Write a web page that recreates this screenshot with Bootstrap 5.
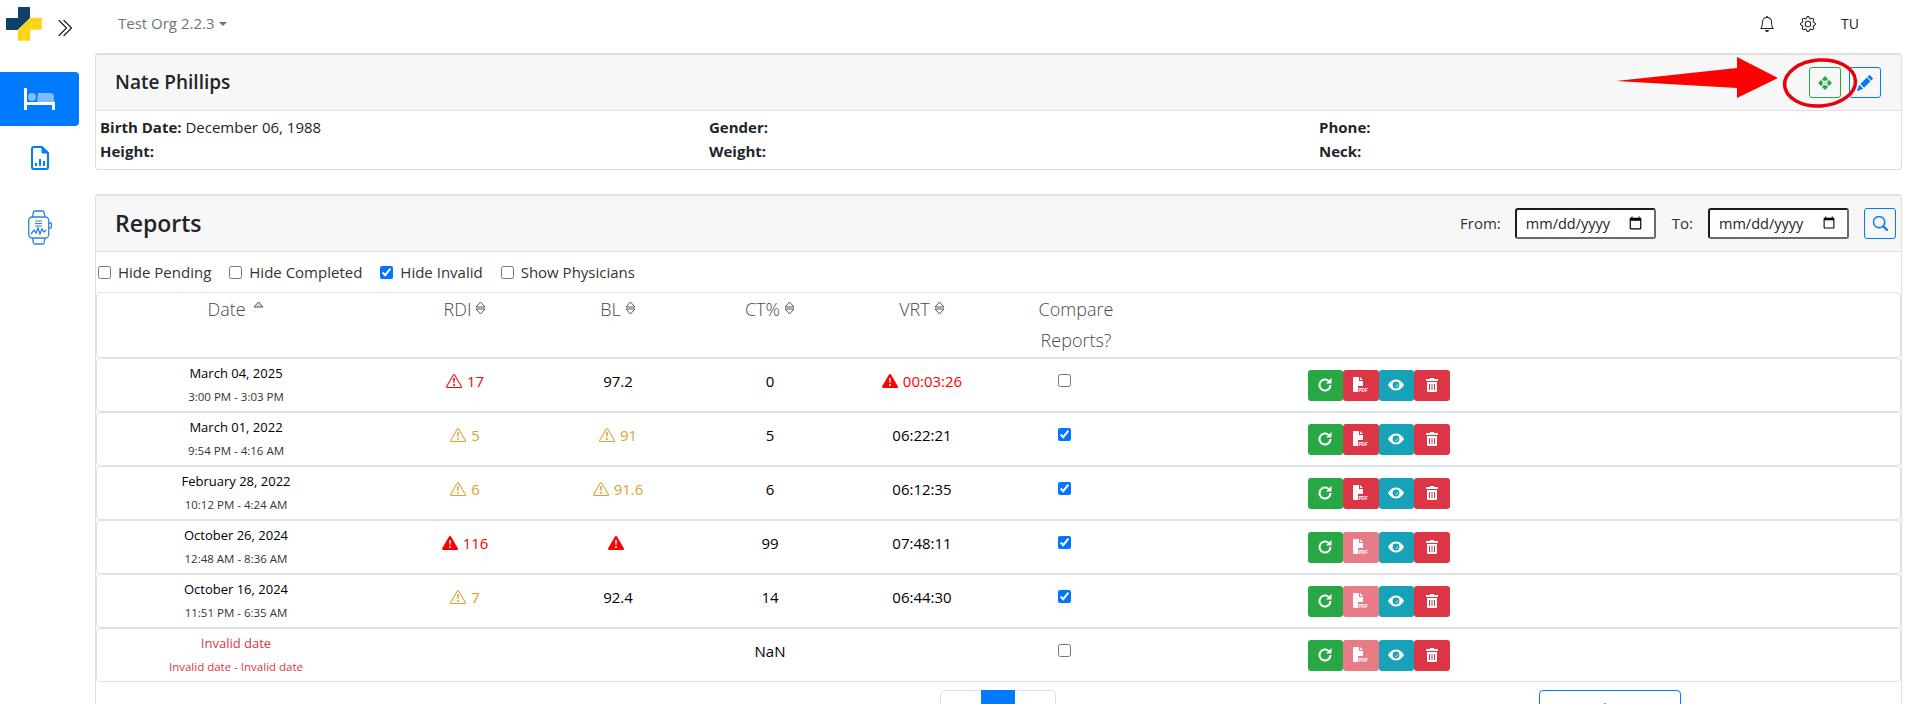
<!DOCTYPE html>
<html lang="en"><head><meta charset="utf-8"><title>Reports</title>
<link href="https://cdn.jsdelivr.net/npm/bootstrap@5.3.0/dist/css/bootstrap.min.css" rel="stylesheet">
<style>
html,body{height:704px;overflow:hidden}
body{font-family:"Open Sans","Noto Sans",sans-serif;font-size:15px;color:#212529;background:#fff}
.shell{display:flex;width:1916px}
.rail{width:79px;flex:none}
.logo-row{height:53px;display:flex;align-items:flex-start;padding:7px 0 0 6px;gap:12px}
.rail-tile{height:54px;margin-top:19px;background:#007bff;border-radius:0 4px 4px 0;display:flex;align-items:center;justify-content:center}
.rail-ico{display:flex;justify-content:center;margin-top:20px}
.rail-ico.watch{margin-top:40px}
.main{flex:1;padding-left:16px;padding-right:14px;min-width:0}
.topbar{height:53px;display:flex;align-items:center;padding-left:23px;padding-right:43px;margin-top:-3px;color:#6c757d}
.org{font-size:15px;color:#6c757d}
.org::after{content:"";display:inline-block;margin-left:4px;vertical-align:3px;border-top:4px solid;border-left:4px solid transparent;border-right:4px solid transparent}
.top-r{margin-left:auto;display:flex;align-items:center;gap:25px;color:#212529;font-size:14px}
.pcard{border:1px solid #dfdfdf;border-radius:4px;border-top-width:2px;margin-top:3px;position:relative}
.phead{background:#f7f7f7;border-bottom:1px solid #dfdfdf;display:flex;align-items:center;padding:0 20px 0 19px;height:56px;border-radius:4px 4px 0 0}
.pname{font-size:19px;font-weight:600;color:#212529}
.rtitle{font-size:23px;font-weight:600;color:#212529}
.head-tools{margin-left:auto;display:flex;align-items:center;gap:8px}
.sq{width:32px;height:31px;padding:0;display:flex;align-items:center;justify-content:center;border-radius:3px;background:transparent}
.sq-g{border:1px solid #28a745}
.sq-b{border:1px solid #007bff}
.info{display:grid;grid-template-columns:609px 610px 1fr;padding:5px 4px 6px;line-height:23.500px;font-size:15px}
.info b{font-weight:700}
.card-two{margin-top:24px;border:1px solid #dfdfdf;border-top-width:2px;border-bottom:0;border-radius:4px 4px 0 0;height:600px}
.card-two .phead{padding-right:5px}
.lbl{font-size:15px;color:#333}
.lbl-from{margin-right:14px}
.lbl-to{margin:0 15px 0 16px}
.search-gap{margin-left:15px}
.datein{width:141px;height:31px;border:2px solid;border-color:#1c1c1c #6a6a6a #6a6a6a #1c1c1c;border-radius:3px;padding:0 9px;font:14.500px "Open Sans",sans-serif;color:#212529;background:#fff}
.filters{display:flex;align-items:center;height:40px;padding-left:2px;font-size:15px;color:#333;gap:18px}
.filters label{display:flex;align-items:center;gap:7px}
.chk{width:13px;height:13px;margin:0;accent-color:#0075ff}
.rowgrid{display:grid;grid-template-columns:278px 180px 126px 178px 126px 158px 471px 1fr;align-items:center;text-align:center;border:1px solid #dee2e6;border-radius:4px;height:54px;color:#000}
.hrow{height:66px;align-items:start;font-size:18px;font-weight:300;line-height:31px;color:#4a4a4a;padding-top:1px}
.hrow svg{vertical-align:1px}
.cmp-head{padding-left:24px}
.dt{font-size:13px;line-height:24px;color:#333}
.tm{font-size:11.500px;line-height:24px;color:#333}
.val{font-size:15px}
.up-cell{padding-bottom:8px}
.red{color:#f00}.amber{color:#e0a030}
.invalid,.invalid .tm{color:#dc3545}
.ok-ico{vertical-align:-2px;margin-right:5px}
.acts{display:flex;justify-content:center}
.act{width:35.500px;height:31px;border:0;padding:0;display:flex;align-items:center;justify-content:center;border-radius:3px;color:#fff}
.a-g{background:#28a745}.a-r{background:#dc3545}.a-t{background:#17a2b8}.a-f{background:#e77c87}
.foot{display:flex;position:relative;height:40px;margin-top:8px}
.pager{margin-left:844px;display:flex;height:40px;border:1px solid #dee2e6;border-radius:4px;width:116px;color:#007bff;font-size:15px;line-height:28px;text-align:center}
.pager span{flex:1}
.pager .on{flex:none;width:34px;background:#007bff;color:#fff;margin-top:-1px;line-height:42px}
.more{margin-left:483px;width:142px;height:40px;border:1px solid #007bff;border-radius:4px;background:#fff;color:#007bff;font-size:15px;padding:0 0 3px}
.callout{position:absolute;left:1610px;top:50px;pointer-events:none}
</style></head>
<body>
<div class="shell">
<aside class="rail">
 <div class="logo-row">
  <svg width="36" height="34" viewBox="0 0 36 34"><path d="M12.500 .5h11v11l-12 11h-11v-11h12z" fill="#0f3f6b" stroke="#0f3f6b" stroke-linejoin="round"/><path d="M24 11h11.500v11.500H24V33.500H12V23z" fill="#fed41c" stroke="#fed41c" stroke-linejoin="round" stroke-width=".5"/></svg>
  <svg width="20" height="20" viewBox="0 0 16 16" fill="#212529" style="margin-top:11px"><path d="M3.646 1.646a.5.500 0 0 1 .708 0l6 6a.5.500 0 0 1 0 .708l-6 6a.5.500 0 0 1-.708-.708L9.293 8 3.646 2.354a.5.500 0 0 1 0-.708z"/><path d="M7.646 1.646a.5.500 0 0 1 .708 0l6 6a.5.500 0 0 1 0 .708l-6 6a.5.500 0 0 1-.708-.708L13.293 8 7.646 2.354a.5.500 0 0 1 0-.708z"/></svg>
 </div>
 <div class="rail-tile">
  <svg width="31" height="22" viewBox="0 0 31 22"><path d="M14 5h12a4 4 0 0 1 4 4v6H13z" fill="#80bdff"/><circle cx="8" cy="9" r="4" fill="#80bdff"/><path d="M1.500 1v20M1 15.500h29M29.500 15v6" stroke="#fff" stroke-width="3" stroke-linecap="round" fill="none"/></svg>
 </div>
 <div class="rail-ico">
  <svg width="18" height="24" viewBox="0 0 18 24" fill="none" stroke="#007bff" stroke-width="2"><path d="M3 1h8l6 6v14a2 2 0 0 1-2 2H3a2 2 0 0 1-2-2V3a2 2 0 0 1 2-2z"/><path d="M11 2l5 5h-5z" fill="#007bff" stroke-width="1"/><path d="M5 20v-3M9 20v-7M13 20v-5"/></svg>
 </div>
 <div class="rail-ico watch">
  <svg width="24" height="35" viewBox="0 0 24 35" fill="none" stroke="#2f80e0" stroke-width="1.300"><rect x=".75" y="7" width="20" height="21" rx="3.500"/><path d="M4.500 7l1-5a1.500 1.500 0 0 1 1.500-1h7.500a1.500 1.500 0 0 1 1.500 1l1 5M4.500 28l1 5a1.500 1.500 0 0 0 1.500 1h7.500a1.500 1.500 0 0 0 1.500-1l1-5M21 13h1.500a1 1 0 0 1 1 1v3a1 1 0 0 1-1 1H21"/><path d="M3 24l3-4 2 3 2-5 2 6 2-5 2 3 2-2"/><path d="M7 11h7M7 13.500h7M7 16h7" stroke-width="1"/></svg>
 </div>
</aside>
<main class="main">
 <div class="topbar">
  <span class="org">Test Org 2.2.3</span>
  <div class="top-r">
   <svg width="16" height="16" viewBox="0 0 16 16" fill="#212529"><path d="M8 16a2 2 0 0 0 2-2H6a2 2 0 0 0 2 2zM8 1.918l-.797.161A4.002 4.002 0 0 0 4 6c0 .628-.134 2.197-.459 3.742-.16.767-.376 1.566-.663 2.258h10.244c-.287-.692-.502-1.490-.663-2.258C12.134 8.197 12 6.628 12 6a4.002 4.002 0 0 0-3.203-3.920L8 1.917zM14.220 12c.223.447.481.801.78 1H1c.299-.199.557-.553.78-1C2.680 10.200 3 6.880 3 6c0-2.420 1.720-4.440 4.005-4.901a1 1 0 1 1 1.990 0A5.002 5.002 0 0 1 13 6c0 .88.32 4.200 1.220 6z"/></svg>
   <svg width="16" height="16" viewBox="0 0 16 16" fill="#212529"><path d="M8 4.754a3.246 3.246 0 1 0 0 6.492 3.246 3.246 0 0 0 0-6.492zM5.754 8a2.246 2.246 0 1 1 4.492 0 2.246 2.246 0 0 1-4.492 0z"/><path d="M9.796 1.343c-.527-1.790-3.065-1.790-3.592 0l-.094.319a.873.873 0 0 1-1.255.52l-.292-.16c-1.640-.892-3.433.902-2.540 2.541l.159.292a.873.873 0 0 1-.52 1.255l-.319.094c-1.790.527-1.790 3.065 0 3.592l.319.094a.873.873 0 0 1 .52 1.255l-.16.292c-.892 1.640.901 3.434 2.541 2.540l.292-.159a.873.873 0 0 1 1.255.52l.094.319c.527 1.790 3.065 1.790 3.592 0l.094-.319a.873.873 0 0 1 1.255-.52l.292.16c1.640.893 3.434-.902 2.540-2.541l-.159-.292a.873.873 0 0 1 .52-1.255l.319-.094c1.790-.527 1.790-3.065 0-3.592l-.319-.094a.873.873 0 0 1-.52-1.255l.16-.292c.893-1.640-.902-3.433-2.541-2.540l-.292.159a.873.873 0 0 1-1.255-.52l-.094-.319zm-2.633.283c.246-.835 1.428-.835 1.674 0l.094.319a1.873 1.873 0 0 0 2.693 1.115l.291-.16c.764-.415 1.600.42 1.184 1.185l-.159.292a1.873 1.873 0 0 0 1.116 2.692l.318.094c.835.246.835 1.428 0 1.674l-.319.094a1.873 1.873 0 0 0-1.115 2.693l.16.291c.415.764-.42 1.600-1.185 1.184l-.291-.159a1.873 1.873 0 0 0-2.693 1.116l-.094.318c-.246.835-1.428.835-1.674 0l-.094-.319a1.873 1.873 0 0 0-2.692-1.115l-.292.16c-.764.415-1.600-.42-1.184-1.185l.159-.291A1.873 1.873 0 0 0 1.945 8.930l-.319-.094c-.835-.246-.835-1.428 0-1.674l.319-.094A1.873 1.873 0 0 0 3.060 4.377l-.16-.292c-.415-.764.42-1.600 1.185-1.184l.292.159a1.873 1.873 0 0 0 2.692-1.115l.094-.319z"/></svg>
   <span>TU</span>
  </div>
 </div>
 <section class="pcard">
  <div class="phead"><span class="pname">Nate Phillips</span>
   <div class="head-tools">
    <button class="sq sq-g" type="button" aria-label="Move"><svg width="14" height="14" viewBox="0 0 14 14" fill="#28a745"><path d="M7 0l3 3-1.500 1.700h-3L4 3zM7 14l-3-3 1.500-1.700h3L10 11zM0 7l3-3 1.700 1.500v3L3 10zM14 7l-3 3-1.700-1.500v-3L11 4z"/><circle cx="7" cy="7" r="1" fill="#8fd19e"/></svg></button>
    <button class="sq sq-b" type="button" aria-label="Edit"><svg width="16" height="16" viewBox="0 0 16 16" fill="#007bff"><path d="M12.854.146a.5.500 0 0 0-.707 0L10.500 1.793 14.207 5.500l1.647-1.646a.5.500 0 0 0 0-.708l-3-3zm.646 6.061L9.793 2.500 3.293 9H3.500a.5.500 0 0 1 .5.500v.5h.5a.5.500 0 0 1 .5.500v.5h.5a.5.500 0 0 1 .5.500v.5h.5a.5.500 0 0 1 .5.500v.207l6.500-6.500zm-7.468 7.468A.5.500 0 0 1 6 13.500V13h-.5a.5.500 0 0 1-.5-.5V12h-.5a.5.500 0 0 1-.5-.5V11h-.5a.5.500 0 0 1-.5-.5V10h-.5a.499.499 0 0 1-.175-.032l-.179.178a.5.500 0 0 0-.11.168l-2 5a.5.500 0 0 0 .65.65l5-2a.5.500 0 0 0 .168-.11l.178-.178z"/></svg></button>
   </div>
  </div>
  <div class="info">
   <div><b>Birth Date:</b> December 06, 1988</div><div><b>Gender:</b></div><div><b>Phone:</b></div>
   <div><b>Height:</b></div><div><b>Weight:</b></div><div><b>Neck:</b></div>
  </div>
 </section>
 <section class="card-two">
  <div class="phead"><span class="rtitle">Reports</span>
   <div class="head-tools" style="gap:0">
    <span class="lbl lbl-from">From:</span><input class="datein" type="date" aria-label="From">
    <span class="lbl lbl-to">To:</span><input class="datein" type="date" aria-label="To">
    <button class="sq sq-b search-gap" type="button" aria-label="Search"><svg width="15" height="15" viewBox="0 0 16 16" fill="#007bff" stroke="#007bff" stroke-width=".6"><path d="M11.742 10.344a6.500 6.500 0 1 0-1.397 1.398h-.001c.03.04.062.078.098.115l3.850 3.850a1 1 0 0 0 1.415-1.414l-3.850-3.850a1.007 1.007 0 0 0-.115-.1zM12 6.500a5.500 5.500 0 1 1-11 0 5.500 5.500 0 0 1 11 0z"/></svg></button>
   </div>
  </div>
  <div class="filters">
   <label><input class="chk" type="checkbox">Hide Pending</label>
   <label><input class="chk" type="checkbox">Hide Completed</label>
   <label><input class="chk" type="checkbox" checked>Hide Invalid</label>
   <label><input class="chk" type="checkbox">Show Physicians</label>
  </div>
  <div id="tbl"></div>
  <div class="foot"><div class="pager"><span>«</span><span class="on">1</span><span>»</span></div><button class="more" type="button">Load More</button></div>
 </section>
</main>
</div>
<svg class="callout" width="270" height="70" viewBox="0 0 270 70" aria-hidden="true"><path d="M6 31L127 18V7l41 21-41 20V38z" fill="#f00"/><ellipse cx="210" cy="33" rx="35.500" ry="23" fill="none" stroke="#e8000b" stroke-width="3.500" transform="rotate(-4 210 33)"/></svg>
<script>
const W='M7.938 2.016A.13.13 0 0 1 8.002 2a.13.13 0 0 1 .063.016.146.146 0 0 1 .054.057l6.857 11.667c.036.06.035.124.002.183a.163.163 0 0 1-.054.06.116.116 0 0 1-.066.017H1.146a.115.115 0 0 1-.066-.017.163.163 0 0 1-.054-.06.176.176 0 0 1 .002-.183L7.884 2.073a.147.147 0 0 1 .054-.057zm1.044-.45a1.130 1.130 0 0 0-1.960 0L.165 13.233c-.457.778.091 1.767.98 1.767h13.713c.889 0 1.438-.99.98-1.767L8.982 1.566zM7.002 12a1 1 0 1 1 2 0 1 1 0 0 1-2 0zM7.100 5.995a.905.905 0 1 1 1.800 0l-.35 3.507a.552.552 0 0 1-1.100 0L7.100 5.995z';
const F='M8.982 1.566a1.130 1.130 0 0 0-1.960 0L.165 13.233c-.457.778.091 1.767.98 1.767h13.713c.889 0 1.438-.99.98-1.767L8.982 1.566zM8 5c.535 0 .954.462.9.995l-.35 3.507a.552.552 0 0 1-1.100 0L7.100 5.995A.905.905 0 0 1 8 5zm.002 6a1 1 0 1 1 0 2 1 1 0 0 1 0-2z';
const ico=(d,c)=>`<svg class="ok-ico" width="16" height="16" viewBox="0 0 16 16" fill="${c}"><path d="${d}"/></svg>`;
const cell=v=>{if(!v)return '';if(typeof v==='string')return `<span>${v}</span>`;
 const c=v[0]==='a'?'#e0a030':'#f00',k=v[0]==='a'?'amber':'red',d=v[1]==='o'?W:F;return `<span class="${k}">${ico(d,c)}${v[2]||''}</span>`};
const sortI=`<svg width="11" height="14" viewBox="0 0 11 14" fill="none" stroke="#555" style="margin-left:4px"><path d="M1 6l4.500-5L10 6zM1 8l4.500 5L10 8z"/></svg>`;
const upI=`<svg width="11" height="14" viewBox="0 0 11 14" fill="#ddd" stroke="#555" style="margin-left:3px"><path d="M1 6l4.500-5L10 6z"/></svg>`;
const redo=`<svg width="16" height="16" viewBox="0 0 16 16"><path d="M13.500 8a5.500 5.500 0 1 1-1.600-3.900" fill="none" stroke="#fff" stroke-width="2"/><path d="M14.500 1v5.500H9z" fill="#fff"/></svg>`;
const pdf=`<svg width="15" height="16" viewBox="0 0 15 16"><path d="M0 1a1 1 0 0 1 1-1h5v4h4v5H5v6H1a1 1 0 0 1-1-1zM7 0l3 3H7z" fill="#fff"/><text x="5.500" y="14.500" font-size="4.600" font-weight="700" fill="#fff" font-family="Liberation Sans,sans-serif">PDF</text></svg>`;
const eye=`<svg width="16" height="12" viewBox="0 0 16 12"><path d="M0 6s3-5.500 8-5.500S16 6 16 6s-3 5.500-8 5.500S0 6 0 6z" fill="#fff"/><circle cx="8" cy="6" r="3.400" fill="#17a2b8"/><path d="M9.800 6a1.800 1.800 0 0 1-2.800 1.500C8.500 7.500 9 6.800 9.200 5z" fill="#fff"/></svg>`;
const trash=`<svg width="12" height="14" viewBox="0 0 12 14"><path d="M4 0h4v1h4v2H0V1h4zM1 4h10v9a1 1 0 0 1-1 1H2a1 1 0 0 1-1-1z" fill="#fff"/><path d="M3.500 6v6M6 6v6M8.500 6v6" stroke="#dc3545"/></svg>`;
const rows=[
 ['March 04, 2025','3:00 PM - 3:03 PM',['r','o','17'],'97.2','0',['r','f','00:03:26'],0,0],
 ['March 01, 2022','9:54 PM - 4:16 AM',['a','o','5'],['a','o','91'],'5','06:22:21',1,0],
 ['February 28, 2022','10:12 PM - 4:24 AM',['a','o','6'],['a','o','91.6'],'6','06:12:35',1,0],
 ['October 26, 2024','12:48 AM - 8:36 AM',['r','f','116'],['r','f',''],'99','07:48:11',1,1],
 ['October 16, 2024','11:51 PM - 6:35 AM',['a','o','7'],'92.4','14','06:44:30',1,1],
 ['Invalid date','Invalid date - Invalid date','','','NaN','',0,1]];
let h=`<div class="rowgrid hrow"><div>Date ${upI}</div><div>RDI${sortI}</div><div>BL${sortI}</div><div>CT%${sortI}</div><div>VRT${sortI}</div><div class="cmp-head">Compare<br>Reports?</div><div></div><div></div></div>`;
for(const r of rows){h+=`<div class="rowgrid val"><div class="${r[0]==='Invalid date'?'invalid':''}"><div class="dt" style="color:inherit">${r[0]}</div><div class="tm">${r[1]}</div></div><div class="up-cell">${cell(r[2])}</div><div class="up-cell">${cell(r[3])}</div><div class="up-cell">${cell(r[4])}</div><div class="up-cell">${cell(r[5])}</div><div class="up-cell"><input class="chk" type="checkbox" ${r[6]?'checked':''} aria-label="Compare"></div><div class="acts"><button class="act a-g" type="button" aria-label="Rerun">${redo}</button><button class="act ${r[7]?'a-f':'a-r'}" type="button" aria-label="PDF">${pdf}</button><button class="act a-t" type="button" aria-label="View">${eye}</button><button class="act a-r" type="button" aria-label="Delete">${trash}</button></div><div></div></div>`}
document.getElementById('tbl').innerHTML=h;
</script>
<script src="https://cdn.jsdelivr.net/npm/bootstrap@5.3.0/dist/js/bootstrap.bundle.min.js"></script>
</body></html>
